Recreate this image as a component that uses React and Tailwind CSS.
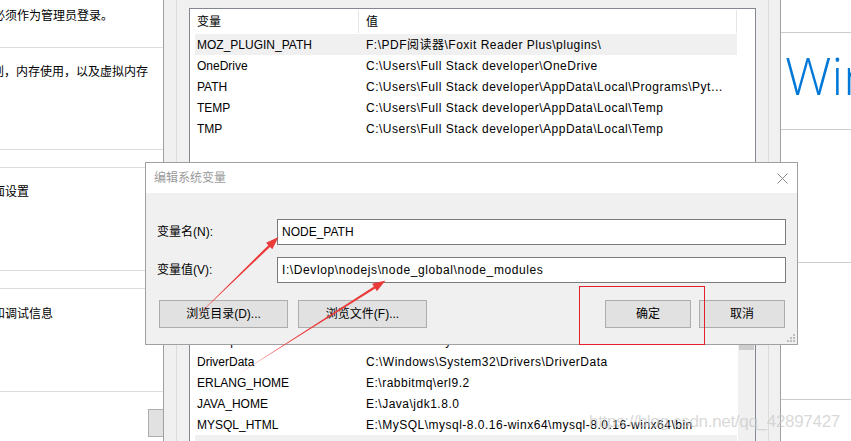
const F = "font-['Liberation_Sans','Noto_Sans_CJK_SC',sans-serif]";

const topRows = [
  ["MOZ_PLUGIN_PATH", "F:\\PDF阅读器\\Foxit Reader Plus\\plugins\\", true],
  ["OneDrive", "C:\\Users\\Full Stack developer\\OneDrive"],
  ["PATH", "C:\\Users\\Full Stack developer\\AppData\\Local\\Programs\\Python\\Python37\\Scripts\\"],
  ["TEMP", "C:\\Users\\Full Stack developer\\AppData\\Local\\Temp"],
  ["TMP", "C:\\Users\\Full Stack developer\\AppData\\Local\\Temp"],
];

const bottomRows = [
  ["CLASSPATH", ".;%JAVA_HOME%\\lib;%JAVA_HOME%\\lib\\tools.jar"],
  ["ComSpec", "C:\\Windows\\system32\\cmd.exe"],
  ["DriverData", "C:\\Windows\\System32\\Drivers\\DriverData"],
  ["ERLANG_HOME", "E:\\rabbitmq\\erl9.2"],
  ["JAVA_HOME", "E:\\Java\\jdk1.8.0"],
  ["MYSQL_HTML", "E:\\MySQL\\mysql-8.0.16-winx64\\mysql-8.0.16-winx64\\bin"],
  ["NODE_PATH", "I:\\Devlop\\nodejs\\node_global\\node_modules", true],
  ["NUMBER_OF_PROCESSORS", "4"],
];

function Row({ name, value, sel }) {
  return (
    <div className={`flex h-[21px] items-center ${sel ? "bg-[#f0f0f0]" : ""}`}>
      <div className="w-[163px] pl-[2px] whitespace-nowrap overflow-hidden">{name}</div>
      <div className="flex-1 min-w-0 pl-[8px] pr-[8px] whitespace-nowrap overflow-hidden text-ellipsis tracking-[0.5px]">{value}</div>
    </div>
  );
}

function Header() {
  return (
    <div className="flex h-[25px]">
      <div className="w-[163px] pl-[2px] flex items-center">变量</div>
      <div className="w-px bg-[#e5e5e5] my-[1px]" />
      <div className="flex-1 pl-[7px] flex items-center">值</div>
      <div className="w-px bg-[#e5e5e5] my-[1px]" />
    </div>
  );
}

function Btn({ w, children }) {
  return (
    <div className={`${w} h-[28px] bg-[#e1e1e1] border border-[#adadad] flex items-center justify-center`}>
      {children}
    </div>
  );
}

export default function App() {
  return (
    <div className={`relative w-[851px] h-[441px] overflow-hidden flex bg-white text-[12px] text-black ${F}`}>
      {/* Left: system properties */}
      <div className="w-[163px] shrink-0 h-full overflow-hidden bg-white">
        <div className="h-[47px] pt-[8px] leading-[16px] whitespace-nowrap">
          <span className="ml-[-7px]">必须作为管理员登录。</span>
        </div>
        <div className="h-[103px] border-y border-[#dcdcdc] pt-[16px] leading-[16px] whitespace-nowrap">
          <span className="ml-[-8px]">划，内存使用，以及虚拟内存</span>
        </div>
        <div className="mt-[17px] h-[104px] border-y border-[#dcdcdc] pt-[16px] leading-[16px] whitespace-nowrap">
          <span className="ml-[-7px]">面设置</span>
        </div>
        <div className="mt-[17px] h-[104px] border-y border-[#dcdcdc] pt-[17px] leading-[16px] whitespace-nowrap">
          <span className="ml-[-7px]">和调试信息</span>
        </div>
        <div className="mt-[17px] ml-[148px] w-[100px] h-[28px] bg-[#e1e1e1] border border-[#adadad]" />
      </div>

      {/* Middle: environment variables dialog */}
      <div className="w-[618px] shrink-0 h-full bg-[#f0f0f0] border-x border-[#a0a0a0] pl-[12px] pr-[11px]">
        <div className="h-full border-x border-[#dcdcdc] px-[12px] pt-[8px]">
          <div className="h-[200px] border border-[#828790] bg-white">
            <div className="ml-[5px] w-[542px]">
              <Header />
              {topRows.map(([n, v, s]) => (
                <Row key={n} name={n} value={v} sel={s} />
              ))}
            </div>
          </div>
          <div className="mt-[76px] h-[200px] border border-[#828790] bg-white flex">
            <div className="w-[548px] pl-[5px]">
              <div className="w-[542px]">
                <div className="h-[24px]" />
                {bottomRows.map(([n, v, s]) => (
                  <Row key={n} name={n} value={v} sel={s} />
                ))}
              </div>
            </div>
            <div className="w-[17px] bg-[#f0f0f0]">
              <div className="h-[17px]" />
              <div className="mt-[18px] mx-[1px] h-[30px] bg-[#cdcdcd]" />
            </div>
          </div>
        </div>
      </div>

      {/* Right: system panel */}
      <div className="flex-1 h-full bg-white overflow-hidden">
        <div className="h-[32px]" />
        <div className="h-[97px] border-t border-[#cccccc] pt-[16px] pl-[4px] whitespace-nowrap">
          <span className="font-['Open_Sans',sans-serif] font-light text-[52px] leading-none text-[#0078d7]">Windows 10</span>
        </div>
        <div className="h-[133px] border-t border-[#cccccc]" />
        <div className="h-[137px] border-t border-[#cccccc]" />
        <div className="border-t border-[#cccccc]" />
      </div>

      {/* Edit system variable dialog */}
      <div className="absolute left-[145px] top-[162px] w-[653px] h-[183px] border border-[#a0a0a0] bg-[#f0f0f0]">
        <div className="h-[30px] bg-white flex items-center justify-between pl-[8px] pr-[9px]">
          <span className="text-[#9a9a9a]">编辑系统变量</span>
          <svg width="11" height="11" viewBox="0 0 11 11">
            <path d="M0.5 0.5L10.5 10.5M10.5 0.5L0.5 10.5" stroke="#8a8a8a" strokeWidth="1" />
          </svg>
        </div>
        <div className="pt-[26px]">
          <div className="flex items-center pl-[11px]">
            <div className="w-[120px]">变量名(N):</div>
            <div className="w-[509px] h-[26px] border border-[#7a7a7a] bg-white pl-[4px] flex items-center">NODE_PATH</div>
          </div>
          <div className="mt-[12px] flex items-center pl-[11px]">
            <div className="w-[120px]">变量值(V):</div>
            <div className="w-[509px] h-[26px] border border-[#7a7a7a] bg-white pl-[4px] flex items-center tracking-[0.6px]">I:\Devlop\nodejs\node_global\node_modules</div>
          </div>
          <div className="mt-[17px] flex justify-between pl-[13px] pr-[12px]">
            <div className="flex gap-[10px]">
              <Btn w="w-[129px]">浏览目录(D)...</Btn>
              <Btn w="w-[129px]">浏览文件(F)...</Btn>
            </div>
            <div className="flex gap-[8px]">
              <Btn w="w-[86px]">确定</Btn>
              <Btn w="w-[86px]">取消</Btn>
            </div>
          </div>
        </div>
        <svg className="absolute right-[1px] bottom-[1px]" width="10" height="10" viewBox="0 0 10 10">
          <rect x="7" y="1" width="2" height="2" fill="#bdbdbd" />
          <rect x="4" y="4" width="2" height="2" fill="#bdbdbd" />
          <rect x="7" y="4" width="2" height="2" fill="#bdbdbd" />
          <rect x="1" y="7" width="2" height="2" fill="#bdbdbd" />
          <rect x="4" y="7" width="2" height="2" fill="#bdbdbd" />
          <rect x="7" y="7" width="2" height="2" fill="#bdbdbd" />
        </svg>
      </div>

      {/* Red highlight box */}
      <div className="absolute left-[579px] top-[286px] w-[126px] h-[59px] border border-[#e5202a]" />

      {/* Arrows */}
      <svg className="absolute left-0 top-0 pointer-events-none" width="851" height="441" viewBox="0 0 851 441">
        <polygon fill="#ea3a3a" points="193,320 270.04,246.91 272.33,249.28 278.5,237 266.07,242.82 268.37,245.19" />
        <polygon fill="#ea3a3a" points="237,375 375.17,288.49 376.95,291.28 385.5,280.5 372.11,283.68 373.89,286.47" />
      </svg>

      {/* Watermark */}
      <div className="absolute right-[11px] top-[413px] text-[17px] leading-[17px] tracking-[-0.3px] whitespace-nowrap text-[#c8c8c8]/70 font-['Liberation_Sans',sans-serif]">
        https://blog.csdn.net/qq_42897427
      </div>
    </div>
  );
}
